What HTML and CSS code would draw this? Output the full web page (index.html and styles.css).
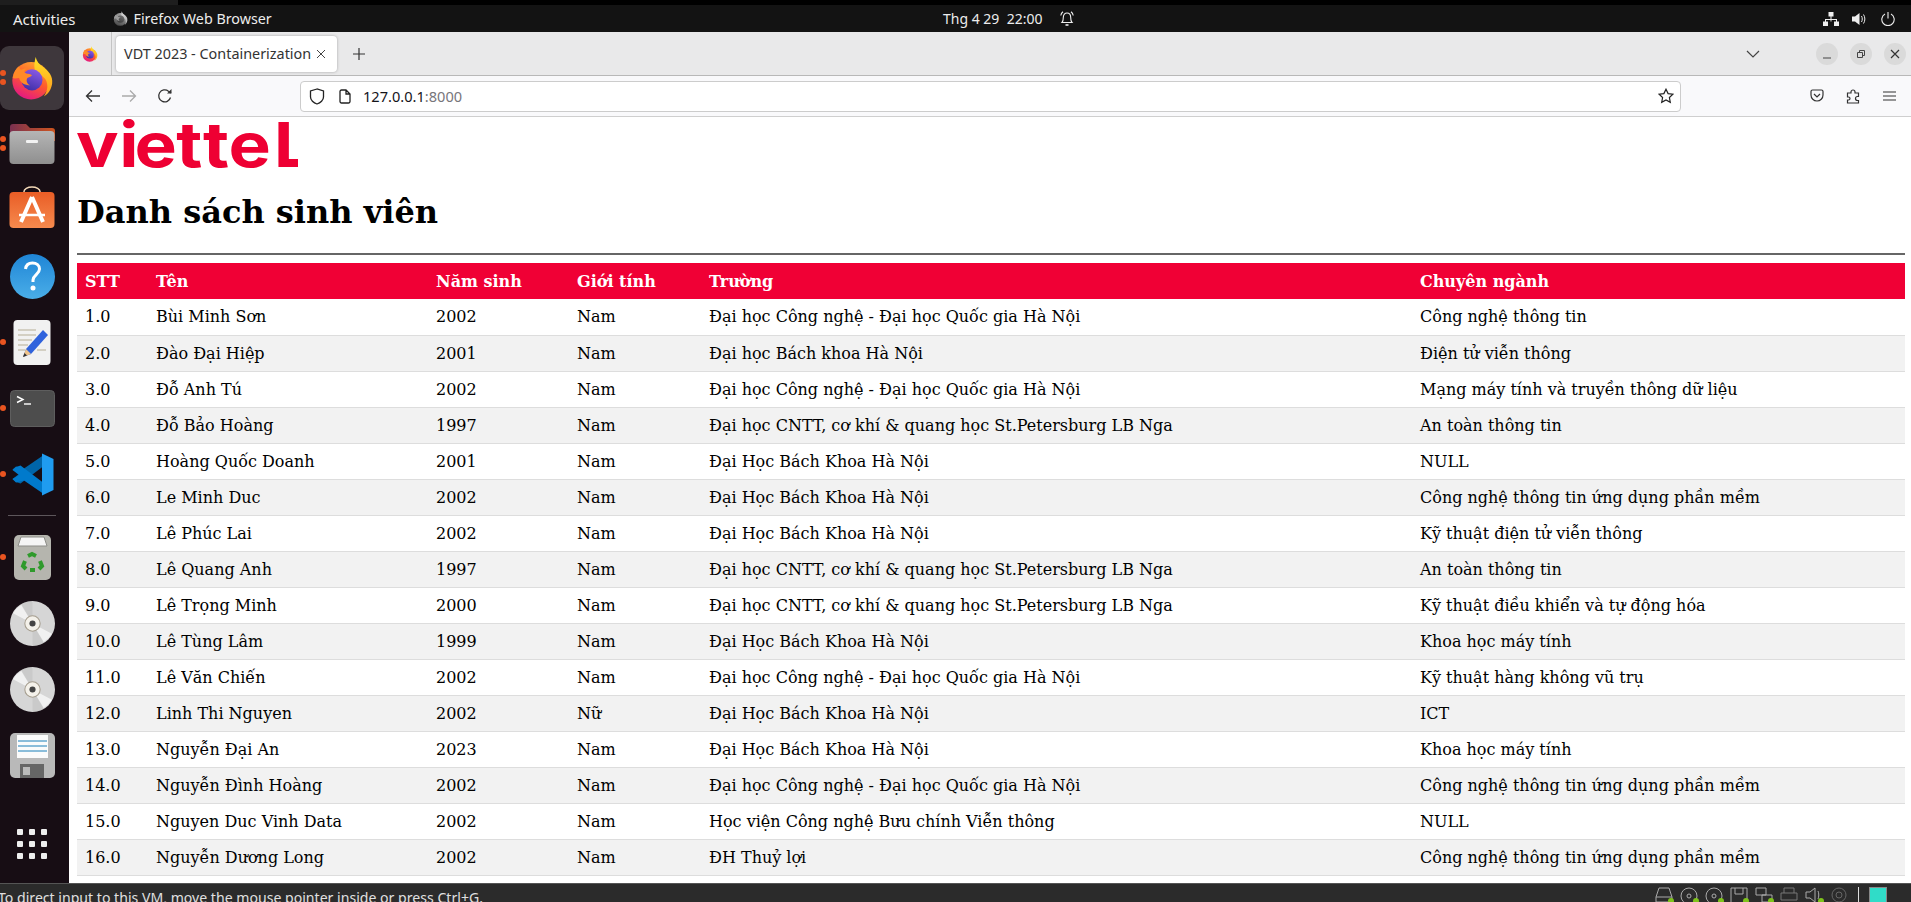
FILE: index.html
```html
<!DOCTYPE html>
<html lang="vi">
<head>
    <meta charset="UTF-8">
    <meta name="viewport" content="width=device-width, initial-scale=1.0">
    <title>VDT 2023 - Containerization</title>
    <link rel="stylesheet" href="styles.css">
</head>
<body>
    <svg class="defs" aria-hidden="true">
        <defs>
            <linearGradient id="ffBody" x1="0.8" y1="0" x2="0.3" y2="1">
                <stop offset="0" stop-color="#ffb02e"/>
                <stop offset="0.5" stop-color="#ff5a2c"/>
                <stop offset="1" stop-color="#e31587"/>
            </linearGradient>
            <linearGradient id="ffFlame" x1="0.5" y1="0" x2="0.5" y2="1">
                <stop offset="0" stop-color="#ffe226"/>
                <stop offset="1" stop-color="#ff9a1f"/>
            </linearGradient>
            <linearGradient id="ffCore" x1="0.7" y1="0" x2="0.3" y2="1">
                <stop offset="0" stop-color="#8a5ae6"/>
                <stop offset="1" stop-color="#3e2fa8"/>
            </linearGradient>
            <linearGradient id="folderBody" x1="0" y1="0" x2="0" y2="1">
                <stop offset="0" stop-color="#b5b5b5"/>
                <stop offset="1" stop-color="#8f8f8f"/>
            </linearGradient>
            <linearGradient id="folderBack" x1="0" y1="0" x2="1" y2="0">
                <stop offset="0" stop-color="#7a3050"/>
                <stop offset="1" stop-color="#d0551f"/>
            </linearGradient>
            <linearGradient id="storeBody" x1="0" y1="0" x2="0" y2="1">
                <stop offset="0" stop-color="#e95d26"/>
                <stop offset="1" stop-color="#f68a4e"/>
            </linearGradient>
            <linearGradient id="helpBody" x1="0" y1="0" x2="0" y2="1">
                <stop offset="0" stop-color="#1f85d6"/>
                <stop offset="1" stop-color="#4aaee8"/>
            </linearGradient>
            <symbol id="firefox" viewBox="0 0 48 48">
                <circle cx="23" cy="27" r="20.5" fill="url(#ffBody)"/>
                <path fill="url(#ffFlame)" d="M28 1c1 5 4 8 8 11 6 4 11 10 10 18-1 7-5 12-9 14 4-6 5-12 2-18-3-5-9-6-12-11-1-5 0-10 1-14z"/>
                <circle cx="24" cy="26" r="11.5" fill="url(#ffCore)"/>
                <path fill="#ff8a26" d="M3 24c1-6 3-10 7-13 0 2 1 3 2 4 2-1 5-2 7-1-3 1-4 3-3 4 2 2 6 1 8 3-1 2-4 2-5 3-2 3 0 7 3 8-6 0-11-3-12-8-2 0-5 1-7 0z"/>
            </symbol>
            <symbol id="disc" viewBox="0 0 44 44">
                <circle cx="22" cy="22" r="22" fill="#d6d6d6"/>
                <path fill="#f1f1f1" d="M22 22 41 32a22 22 0 0 1-8 8zM22 22 3 12a22 22 0 0 1 8-8z"/>
                <path fill="#bdbdbd" d="M22 22V0a22 22 0 0 0-11 3zM22 22v22a22 22 0 0 0 11-3z" opacity="0.45"/>
                <circle cx="22" cy="22" r="7.5" fill="#f4f1ea" stroke="#a59d8e"/>
                <circle cx="22" cy="22" r="3" fill="#444"/>
            </symbol>
        </defs>
    </svg>

    <div class="screen">
        <div class="vm-strip"><div class="vm-strip-tab"></div></div>

        <div class="topbar">
            <div class="topbar-left">
                <span class="activities">Activities</span>
                <span class="app-menu">
                    <svg class="app-menu-icon" width="15" height="15"><use href="#firefox"/></svg>
                    Firefox Web Browser
                </span>
            </div>
            <div class="topbar-clock">
                <span>Thg 4 29&nbsp;&nbsp;22:00</span>
                <svg width="16" height="17" viewBox="0 0 16 17" fill="none" stroke="#eee" stroke-width="1.1">
                    <path d="M3 12.5c1-1 1.3-2 1.3-5C4.300 4.500 6 3 8 3s3.700 1.500 3.700 4.500c0 3 .3 4 1.300 5z"/>
                    <path d="M1.800 5.500C2 4 2.800 2.700 4 1.800M14.200 5.500C14 4 13.200 2.700 12 1.800"/>
                    <path d="M6.500 15h3" stroke-width="1.600"/>
                </svg>
            </div>
            <div class="topbar-tray">
                <svg width="16" height="14" viewBox="0 0 16 14" fill="#eee"><path d="M5.500 0h5v4.500h-5zM7.500 4.500h1V7h5.500v2.500h-1V8H8.500v1.500h-1V8H3v1.500H2V7h5.500zM0 9.500h5V14H0zM11 9.500h5V14h-5z"/></svg>
                <svg width="16" height="14" viewBox="0 0 16 14" fill="#eee"><path d="M0 4.500h3L7.500 1v12L3 9.500H0z"/><path d="M9.500 4c1 1.500 1 4.500 0 6M11.500 2.500c1.800 2.500 1.800 6.500 0 9" fill="none" stroke="#eee"/></svg>
                <svg width="14" height="14" viewBox="0 0 14 14" fill="none" stroke="#eee" stroke-width="1.100"><path d="M4 2a6.200 6.200 0 1 0 6 0M7 0v6.500"/></svg>
            </div>
        </div>

        <div class="desktop">
            <nav class="dock">
                <div class="dock-item is-active">
                    <span class="run-dot run-dot-upper"></span><span class="run-dot run-dot-lower"></span>
                    <svg width="44" height="44"><use href="#firefox"/></svg>
                </div>
                <div class="dock-item">
                    <span class="run-dot run-dot-upper"></span><span class="run-dot run-dot-lower"></span>
                    <svg width="46" height="42" viewBox="0 0 46 42">
                        <path fill="url(#folderBack)" d="M1 4a3 3 0 0 1 3-3h13l4 4h22a3 3 0 0 1 3 3v10H1z"/>
                        <rect y="8" width="45" height="33" x="0.500" rx="4" fill="url(#folderBody)"/>
                        <rect x="17" y="17" width="12" height="3" rx="1" fill="#f2f2f2"/>
                    </svg>
                </div>
                <div class="dock-item dock-item-store">
                    <svg width="46" height="42" viewBox="0 0 46 42">
                        <path d="M15 8V5.500a8 4.500 0 0 1 16 0V8" fill="none" stroke="#f4d9b8" stroke-width="1.500"/>
                        <rect x="0.500" y="6" width="45" height="36" rx="4" fill="url(#storeBody)"/>
                        <path d="M23 11 12 36M23 11l11 25" stroke="#fff" stroke-width="4" fill="none"/>
                        <path d="M10 29h26" stroke="#fff" stroke-width="2.500"/>
                    </svg>
                </div>
                <div class="dock-item">
                    <svg width="45" height="45" viewBox="0 0 45 45">
                        <circle cx="22.500" cy="22.500" r="22.500" fill="url(#helpBody)"/>
                        <path d="M15.500 15c.5-4 3.500-6 7-6 4 0 7 2.500 7 6 0 5-6 5.500-6.500 11v2" fill="none" stroke="#fff" stroke-width="3"/>
                        <circle cx="23" cy="34" r="2.500" fill="#fff"/>
                    </svg>
                </div>
                <div class="dock-item">
                    <span class="run-dot"></span>
                    <svg width="38" height="45" viewBox="0 0 38 45">
                        <rect width="37" height="45" x="0.500" rx="4" fill="#f1f1f1"/>
                        <path d="M5 10h18M5 15h18M5 20h14M5 25h10M5 30h7M24 30h9" stroke="#c9c4b4" stroke-width="1.500"/>
                        <path d="M30 10l5 5-17 19-8 3 3-8z" fill="#2f62dc"/>
                        <path d="M13 29l5 5-8 3z" fill="#eec28a"/>
                        <path d="M10 37l1.500-4 2.500 2.500z" fill="#333"/>
                    </svg>
                </div>
                <div class="dock-item">
                    <span class="run-dot"></span>
                    <svg width="45" height="37" viewBox="0 0 45 37">
                        <rect x="0.500" y="0.500" width="44" height="36" rx="4" fill="#4d4d4d" stroke="#5e5e5e"/>
                        <path d="M7 6.500l6 3-6 3" fill="none" stroke="#fff" stroke-width="1.400"/>
                        <path d="M14 14h7" stroke="#fff" stroke-width="1.400"/>
                    </svg>
                </div>
                <div class="dock-item">
                    <span class="run-dot"></span>
                    <svg width="43" height="43" viewBox="0 0 43 43">
                        <path fill="#0065a9" d="M1.500 16.500 5 13.500l8 2 19-13v11L9.500 30.500 5 29l-3.500-3 6.500-5z"/>
                        <path fill="#007acc" d="M1.500 26 5 29.500l8-2 19 13v-11L9.500 12.500 5 14l-3.500 3 6.500 5z"/>
                        <path fill="#1f9cf0" d="M31 0.500 42.500 6v31L31 42.500z"/>
                    </svg>
                </div>
                <div class="dock-sep"></div>
                <div class="dock-item">
                    <span class="run-dot"></span>
                    <svg width="37" height="45" viewBox="0 0 37 45">
                        <rect width="37" height="45" rx="5" fill="#b5b5ae"/>
                        <path d="M4 11l3-9h23l3 9z" fill="#f5f5f5" stroke="#8d8d88"/>
                        <g fill="none" stroke="#2f9a2c" stroke-width="4">
                            <path d="M14 21l4-2 4 2"/><path d="M26 26l2 5-3 3"/><path d="M12 34l-3-3 2-5"/><path d="M16 35h5"/>
                        </g>
                    </svg>
                </div>
                <div class="dock-item"><svg width="45" height="45"><use href="#disc"/></svg></div>
                <div class="dock-item"><svg width="45" height="45"><use href="#disc"/></svg></div>
                <div class="dock-item">
                    <svg width="45" height="45" viewBox="0 0 45 45">
                        <rect width="45" height="45" rx="5" fill="#b9b9b9"/>
                        <rect x="7" y="2" width="31" height="23" fill="#fbfbfb"/>
                        <path d="M8 8h29M8 13h29M8 18h29" stroke="#1b7fb8" stroke-width="1"/>
                        <rect x="10" y="31" width="24" height="14" fill="#666"/>
                        <rect x="13" y="34" width="7" height="8" fill="#bbb"/>
                    </svg>
                </div>
                <div class="dock-grid">
                    <span></span><span></span><span></span>
                    <span></span><span></span><span></span>
                    <span></span><span></span><span></span>
                </div>
            </nav>

            <div class="browser">
                <div class="tabbar">
                    <div class="tab-overview"><svg width="16" height="16"><use href="#firefox"/></svg></div>
                    <div class="tab">
                        <span class="tab-title">VDT 2023 - Containerization</span>
                        <svg width="10" height="10" viewBox="0 0 10 10" stroke="#444" fill="none"><path d="M1 1l8 8M9 1l-8 8"/></svg>
                    </div>
                    <svg class="tab-new" width="14" height="14" viewBox="0 0 14 14" stroke="#333" stroke-width="1.200"><path d="M7 1v12M1 7h12"/></svg>
                    <svg class="tab-list" width="14" height="8" viewBox="0 0 14 8" fill="none" stroke="#444" stroke-width="1.200"><path d="M1 1l6 6 6-6"/></svg>
                    <div class="win-buttons">
                        <span class="win-button"><svg width="10" height="10" viewBox="0 0 10 10" stroke="#444"><path d="M1 9h8"/></svg></span>
                        <span class="win-button"><svg width="10" height="10" viewBox="0 0 10 10" stroke="#444" fill="none"><path d="M1.500 3.500h5v5h-5zM3.500 3.500v-2h5v5h-2"/></svg></span>
                        <span class="win-button"><svg width="10" height="10" viewBox="0 0 10 10" stroke="#333" stroke-width="1.200" fill="none"><path d="M1 1l8 8M9 1l-8 8"/></svg></span>
                    </div>
                </div>

                <div class="toolbar">
                    <svg class="nav-back" width="16" height="14" viewBox="0 0 16 14" fill="none" stroke="#333" stroke-width="1.300"><path d="M15 7H1.500M7 1.500 1.500 7 7 12.500"/></svg>
                    <svg class="nav-forward" width="16" height="14" viewBox="0 0 16 14" fill="none" stroke="#aaa" stroke-width="1.300"><path d="M1 7h13.500M9 1.500 14.500 7 9 12.500"/></svg>
                    <svg class="nav-reload" width="16" height="16" viewBox="0 0 16 16" fill="none" stroke="#333" stroke-width="1.300"><path d="M13.500 9.500A6 6 0 1 1 11.500 3.200L14 5"/><path d="M14.500 1v4.500H10" fill="#333" stroke="none"/></svg>
                    <div class="urlbar">
                        <svg class="url-shield" width="16" height="17" viewBox="0 0 16 17" fill="none" stroke="#222" stroke-width="1.300"><path d="M8 1 1.500 3v6c0 3 3 6 6.500 7 3.500-1 6.500-4 6.500-7V3z"/></svg>
                        <svg class="url-page" width="12" height="15" viewBox="0 0 12 15" fill="none" stroke="#222" stroke-width="1.300"><path d="M1 2.500A1.500 1.500 0 0 1 2.500 1H7l4 4v7.500a1.500 1.500 0 0 1-1.500 1.500h-7A1.500 1.500 0 0 1 1 12.500zM7 1v4h4"/></svg>
                        <span class="url-text">127.0.0.1<span class="url-port">:8000</span></span>
                        <svg class="url-star" width="16" height="16" viewBox="0 0 16 16" fill="none" stroke="#222" stroke-width="1.200"><path d="M8 1.200l2.100 4.400 4.800.6-3.500 3.300.9 4.800L8 12l-4.300 2.300.9-4.800L1.100 6.200l4.800-.6z"/></svg>
                    </div>
                    <svg class="tool-pocket" width="14" height="14" viewBox="0 0 14 14" fill="none" stroke="#333" stroke-width="1.200"><path d="M1 2.500A1.500 1.500 0 0 1 2.500 1h9A1.500 1.500 0 0 1 13 2.500V6a6 6 0 0 1-12 0zM4 5l3 3 3-3"/></svg>
                    <svg class="tool-puzzle" width="14" height="15" viewBox="0 0 14 15" fill="none" stroke="#333" stroke-width="1.200"><path d="M1 4h3.500V3a2 2 0 0 1 4 0v1H12v3.500h-1a2 2 0 0 0 0 4h1V14H1v-3h1a1.500 1.500 0 0 0 0-3H1z" transform="translate(.5 0)"/></svg>
                    <svg class="tool-menu" width="13" height="10" viewBox="0 0 13 10" stroke="#333" stroke-width="1.100"><path d="M0 1h13M0 5h13M0 9h13"/></svg>
                </div>

                <main class="page">
                    <svg class="logo" width="222" height="55" viewBox="0 0 222 55" role="img" aria-label="viettel">
                        <text transform="translate(-1 50) scale(1.27 1.1)" x="0 34 46 79 100 120 156" y="0">viettel</text>
                        <path class="logo-hook" d="M206 36v4q0 6 6 6h9"/>
                    </svg>
                    <h1>Danh sách sinh viên</h1>
                    <hr>
                    <table class="students">
                        <colgroup>
                            <col class="col-stt"><col class="col-name"><col class="col-year"><col class="col-gender"><col class="col-school"><col>
                        </colgroup>
                        <thead>
                            <tr><th>STT</th><th>Tên</th><th>Năm sinh</th><th>Giới tính</th><th>Trường</th><th>Chuyên ngành</th></tr>
                        </thead>
                        <tbody>
                            <tr><td>1.0</td><td>Bùi Minh Sơn</td><td>2002</td><td>Nam</td><td>Đại học Công nghệ - Đại học Quốc gia Hà Nội</td><td>Công nghệ thông tin</td></tr>
                            <tr><td>2.0</td><td>Đào Đại Hiệp</td><td>2001</td><td>Nam</td><td>Đại học Bách khoa Hà Nội</td><td>Điện tử viễn thông</td></tr>
                            <tr><td>3.0</td><td>Đỗ Anh Tú</td><td>2002</td><td>Nam</td><td>Đại học Công nghệ - Đại học Quốc gia Hà Nội</td><td>Mạng máy tính và truyền thông dữ liệu</td></tr>
                            <tr><td>4.0</td><td>Đỗ Bảo Hoàng</td><td>1997</td><td>Nam</td><td>Đại học CNTT, cơ khí &amp; quang học St.Petersburg LB Nga</td><td>An toàn thông tin</td></tr>
                            <tr><td>5.0</td><td>Hoàng Quốc Doanh</td><td>2001</td><td>Nam</td><td>Đại Học Bách Khoa Hà Nội</td><td>NULL</td></tr>
                            <tr><td>6.0</td><td>Le Minh Duc</td><td>2002</td><td>Nam</td><td>Đại Học Bách Khoa Hà Nội</td><td>Công nghệ thông tin ứng dụng phần mềm</td></tr>
                            <tr><td>7.0</td><td>Lê Phúc Lai</td><td>2002</td><td>Nam</td><td>Đại Học Bách Khoa Hà Nội</td><td>Kỹ thuật điện tử viễn thông</td></tr>
                            <tr><td>8.0</td><td>Lê Quang Anh</td><td>1997</td><td>Nam</td><td>Đại học CNTT, cơ khí &amp; quang học St.Petersburg LB Nga</td><td>An toàn thông tin</td></tr>
                            <tr><td>9.0</td><td>Lê Trọng Minh</td><td>2000</td><td>Nam</td><td>Đại học CNTT, cơ khí &amp; quang học St.Petersburg LB Nga</td><td>Kỹ thuật điều khiển và tự động hóa</td></tr>
                            <tr><td>10.0</td><td>Lê Tùng Lâm</td><td>1999</td><td>Nam</td><td>Đại Học Bách Khoa Hà Nội</td><td>Khoa học máy tính</td></tr>
                            <tr><td>11.0</td><td>Lê Văn Chiến</td><td>2002</td><td>Nam</td><td>Đại học Công nghệ - Đại học Quốc gia Hà Nội</td><td>Kỹ thuật hàng không vũ trụ</td></tr>
                            <tr><td>12.0</td><td>Linh Thi Nguyen</td><td>2002</td><td>Nữ</td><td>Đại Học Bách Khoa Hà Nội</td><td>ICT</td></tr>
                            <tr><td>13.0</td><td>Nguyễn Đại An</td><td>2023</td><td>Nam</td><td>Đại Học Bách Khoa Hà Nội</td><td>Khoa học máy tính</td></tr>
                            <tr><td>14.0</td><td>Nguyễn Đình Hoàng</td><td>2002</td><td>Nam</td><td>Đại học Công nghệ - Đại học Quốc gia Hà Nội</td><td>Công nghệ thông tin ứng dụng phần mềm</td></tr>
                            <tr><td>15.0</td><td>Nguyen Duc Vinh Data</td><td>2002</td><td>Nam</td><td>Học viện Công nghệ Bưu chính Viễn thông</td><td>NULL</td></tr>
                            <tr><td>16.0</td><td>Nguyễn Dương Long</td><td>2002</td><td>Nam</td><td>ĐH Thuỷ lợi</td><td>Công nghệ thông tin ứng dụng phần mềm</td></tr>
                        </tbody>
                    </table>
                </main>
            </div>
        </div>

        <div class="statusbar">
            <span class="status-text">To direct input to this VM, move the mouse pointer inside or press Ctrl+G.</span>
            <div class="status-icons">
                <span class="status-icon"><svg width="18" height="16" viewBox="0 0 18 16" fill="none" stroke="#aaa"><path d="M4 1h10l3 9v5H1v-5zM1 10h16"/></svg></span>
                <span class="status-icon"><svg width="18" height="18" viewBox="0 0 18 18" fill="none" stroke="#aaa"><circle cx="9" cy="9" r="8"/><circle cx="9" cy="9" r="2"/></svg></span>
                <span class="status-icon"><svg width="18" height="18" viewBox="0 0 18 18" fill="none" stroke="#aaa"><circle cx="9" cy="9" r="8"/><circle cx="9" cy="9" r="2"/></svg></span>
                <span class="status-icon"><svg width="18" height="18" viewBox="0 0 18 18" fill="none" stroke="#aaa"><path d="M1 1h16v16H1zM5 1v6h8V1"/></svg></span>
                <span class="status-icon"><svg width="18" height="16" viewBox="0 0 18 16" fill="none" stroke="#aaa"><path d="M1 1h10v7H1zM7 8h10v7H7z"/></svg></span>
                <span class="status-icon is-off"><svg width="18" height="16" viewBox="0 0 18 16" fill="none" stroke="#777"><path d="M4 6V1h10v5M1 6h16v7H1z"/></svg></span>
                <span class="status-icon"><svg width="18" height="16" viewBox="0 0 18 16" fill="none" stroke="#aaa"><path d="M1 5h4l5-4v14l-5-4H1zM13 4c1 2 1 6 0 8"/></svg></span>
                <span class="status-icon is-off"><svg width="18" height="16" viewBox="0 0 18 16" fill="none" stroke="#666"><circle cx="9" cy="8" r="7"/><circle cx="9" cy="8" r="3"/></svg></span>
                <span class="status-sep"></span>
                <span class="status-vm"></span>
            </div>
        </div>
    </div>
</body>
</html>
```

FILE: styles.css
```css
html, body {
    margin: 0;
    padding: 0;
    height: 100%;
    overflow: hidden;
    background-color: #fff;
}

.defs {
    position: absolute;
    width: 0;
    height: 0;
}

svg {
    display: block;
    flex-shrink: 0;
}

.screen {
    display: flex;
    flex-direction: column;
    height: 902px;
    font-family: "Noto Sans", sans-serif;
}

/* VM window edge and gnome bar */
.vm-strip {
    height: 5px;
    background-color: #000;
}

.vm-strip-tab {
    width: 178px;
    height: 5px;
    background-color: #1e1e1e;
}

.topbar {
    display: grid;
    grid-template-columns: 943px 1fr auto;
    align-items: center;
    height: 27px;
    background-color: #131313;
    color: #ececec;
    font-size: 14.3px;
}

.topbar-left {
    display: flex;
    align-items: center;
}

.activities {
    margin-left: 13px;
    font-size: 15px;
}

.app-menu {
    display: flex;
    align-items: center;
    gap: 6px;
    margin-left: 37px;
}

.app-menu-icon {
    filter: grayscale(1);
}

.topbar-clock {
    display: flex;
    align-items: center;
    gap: 17px;
    font-size: 14px;
}

.topbar-tray {
    display: flex;
    align-items: center;
    gap: 13px;
    padding-right: 16px;
}

.desktop {
    display: flex;
    flex: 1;
    min-height: 0;
}

/* Ubuntu dock */
.dock {
    display: flex;
    flex-direction: column;
    width: 69px;
    padding-top: 13px;
    box-sizing: border-box;
    background-color: #170d14;
}

.dock-item {
    position: relative;
    display: flex;
    align-items: center;
    justify-content: center;
    width: 64px;
    height: 66px;
    flex-shrink: 0;
}

.dock-item-store {
    padding-bottom: 6px;
    box-sizing: border-box;
}

.is-active::before {
    content: "";
    position: absolute;
    top: 1px;
    left: 0;
    width: 64px;
    height: 64px;
    border-radius: 9px;
    background-color: #3e373c;
}

.dock-item svg {
    position: relative;
}

.run-dot {
    position: absolute;
    top: 30px;
    left: 0;
    width: 6px;
    height: 6px;
    border-radius: 50%;
    background-color: #e95420;
    z-index: 1;
}

.run-dot-upper {
    top: 25px;
}

.run-dot-lower {
    top: 34px;
}

.dock-sep {
    width: 48px;
    height: 1px;
    margin: 8px 8px;
    background-color: #5d565b;
}

.dock-grid {
    display: grid;
    grid-template-columns: repeat(3, 6px);
    gap: 6px;
    margin: auto 0 24px 17px;
}

.dock-grid span {
    width: 6px;
    height: 6px;
    border-radius: 1px;
    background-color: #eee;
}

/* Firefox chrome */
.browser {
    display: flex;
    flex-direction: column;
    flex: 1;
    min-width: 0;
}

.tabbar {
    display: flex;
    align-items: center;
    height: 43px;
    background-color: #e9e9ea;
    border-bottom: 1px solid #b8b8b8;
}

.tab-overview {
    display: flex;
    align-items: center;
    justify-content: center;
    width: 42px;
    height: 100%;
    border-right: 1px solid #c4c4c4;
}

.tab {
    display: flex;
    align-items: center;
    justify-content: space-between;
    width: 221px;
    height: 36px;
    margin-left: 4px;
    padding: 0 11px 0 8px;
    box-sizing: border-box;
    background-color: #fff;
    border-radius: 4px;
    box-shadow: 0 0 3px rgba(0, 0, 0, 0.3);
}

.tab-title {
    font-size: 14.4px;
    color: #333;
    white-space: nowrap;
}

.tab-new {
    margin-left: 15px;
}

.tab-list {
    margin-left: auto;
}

.win-buttons {
    display: flex;
    gap: 12px;
    margin-left: 56px;
    padding-right: 5px;
}

.win-button {
    display: flex;
    align-items: center;
    justify-content: center;
    width: 22px;
    height: 22px;
    border-radius: 50%;
    background-color: #dadada;
}

.toolbar {
    display: flex;
    align-items: center;
    height: 40px;
    background-color: #f9f9fb;
    border-bottom: 1px solid #cfcfcf;
}

.nav-back {
    margin-left: 16px;
}

.nav-forward {
    margin-left: 20px;
}

.nav-reload {
    margin-left: 20px;
}

.urlbar {
    display: flex;
    align-items: center;
    width: 1381px;
    height: 31px;
    margin-left: 127px;
    box-sizing: border-box;
    background-color: #fff;
    border: 1px solid #ccc;
    border-radius: 4px;
}

.url-shield {
    margin-left: 8px;
}

.url-page {
    margin-left: 14px;
}

.url-text {
    margin-left: 12px;
    font-size: 14.6px;
    color: #15141a;
}

.url-port {
    color: #77767b;
}

.url-star {
    margin-left: auto;
    margin-right: 6px;
}

.tool-pocket {
    margin-left: 129px;
}

.tool-puzzle {
    margin-left: 22px;
}

.tool-menu {
    margin-left: 23px;
}

/* Page content */
.page {
    flex: 1;
    min-height: 0;
    padding: 0 6px 0 8px;
    background-color: #fff;
    font-family: "DejaVu Serif", serif;
    font-size: 16px;
    color: #000;
}

.logo {
    overflow: visible;
}

.logo text {
    font-family: Inter, sans-serif;
    font-size: 56px;
    font-weight: 700;
    fill: #ee0033;
}

.logo-hook {
    fill: none;
    stroke: #ee0033;
    stroke-width: 8;
}

h1 {
    margin: 22px 0 0;
    font-size: 32px;
    line-height: 37px;
    font-weight: bold;
}

hr {
    height: 2px;
    margin: 22px 0 8px;
    border: 0;
    background-color: #666;
}

.students {
    width: 100%;
    table-layout: fixed;
    border-collapse: collapse;
}

.col-stt {
    width: 71px;
}

.col-name {
    width: 280px;
}

.col-year {
    width: 141px;
}

.col-gender {
    width: 132px;
}

.col-school {
    width: 711px;
}

th, td {
    height: 36px;
    padding: 0 8px;
    box-sizing: border-box;
    text-align: left;
    white-space: nowrap;
}

th {
    background-color: #f00035;
    color: #fff;
}

td {
    border-bottom: 1px solid #ddd;
}

tbody tr:nth-child(even) {
    background-color: #f2f2f2;
}

/* VirtualBox status bar */
.statusbar {
    display: flex;
    align-items: flex-start;
    justify-content: space-between;
    height: 19px;
    box-sizing: border-box;
    overflow: hidden;
    background-color: #2b2b2b;
    border-top: 1px solid #555;
}

.status-text {
    margin: 4px 0 0 -2px;
    font-size: 14.1px;
    line-height: 19px;
    color: #e0e0e0;
    white-space: nowrap;
}

.status-icons {
    display: flex;
    align-items: flex-start;
    gap: 7px;
    padding: 3px 24px 0 0;
}

.status-icon {
    position: relative;
    width: 18px;
}

.status-icon::after {
    content: "";
    position: absolute;
    top: 11px;
    right: -1px;
    width: 6px;
    height: 6px;
    border-radius: 50%;
    background-color: #7fc31c;
}

.status-icon.is-off::after {
    display: none;
}

.status-sep {
    width: 1px;
    height: 17px;
    margin-left: 3px;
    background-color: #ddd;
}

.status-vm {
    width: 18px;
    height: 17px;
    margin-left: 3px;
    background-color: #30dcc8;
    border: 1px solid #888;
    box-sizing: border-box;
}
```
